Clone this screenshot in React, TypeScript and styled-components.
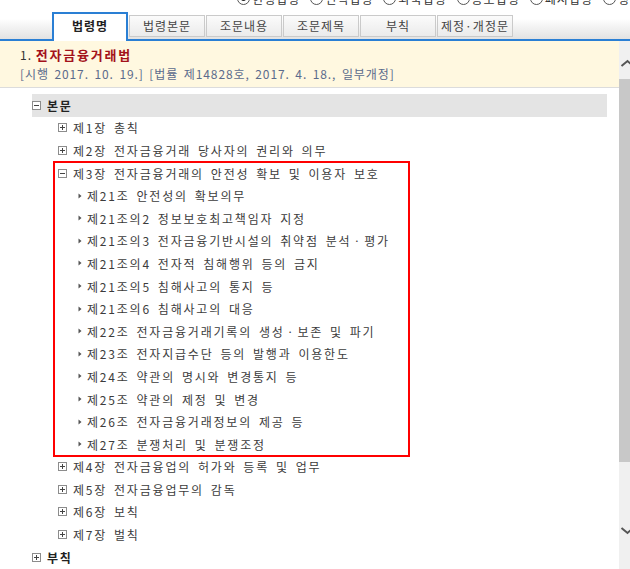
import React from "react";
import styled, { createGlobalStyle } from "styled-components";

const GlobalStyle = createGlobalStyle`
  html, body {
    margin: 0;
    padding: 0;
    background: #fff;
  }
  body {
    width: 630px;
    height: 569px;
    overflow: hidden;
    font-family: "Noto Sans CJK KR", "Noto Sans", sans-serif;
    font-size: 12px;
    color: #333;
  }
`;

const Page = styled.div`
  width: 630px;
  height: 569px;
  display: flex;
  flex-direction: column;
  overflow: hidden;
`;

const RadioRow = styled.div`
  display: flex;
  align-items: center;
  gap: 10px;
  height: 13px;
  margin-top: -8px;
  padding-left: 237px;
  flex: none;
`;

const RadioItem = styled.label`
  display: flex;
  align-items: center;
  gap: 2px;
  flex: none;
  color: #333;
  letter-spacing: 1px;
  line-height: 13px;
  white-space: nowrap;
`;

const RadioCircle = styled.span<{ $checked?: boolean }>`
  width: 11px;
  height: 11px;
  border: 1px solid #555;
  border-radius: 50%;
  background: #fff;
  display: flex;
  align-items: center;
  justify-content: center;

  &::after {
    content: "";
    width: 5px;
    height: 5px;
    border-radius: 50%;
    background: ${(p) => (p.$checked ? "#222" : "transparent")};
  }
`;

const TabBar = styled.div`
  display: flex;
  align-items: flex-end;
  gap: 1px;
  height: 34px;
  padding-left: 52px;
  border-bottom: 2px solid #2a7fd4;
  background: linear-gradient(to bottom, #fff 0%, #fff 40%, #e2e2e2 100%);
  flex: none;
`;

const Tab = styled.div<{ $active?: boolean }>`
  box-sizing: border-box;
  width: 76px;
  display: flex;
  justify-content: center;
  letter-spacing: 1px;
  line-height: 16px;
  white-space: nowrap;
  ${(p) =>
    p.$active
      ? `
    height: 29px;
    margin-bottom: -2px;
    padding-top: 4px;
    border: 2px solid #2a7fd4;
    border-bottom: none;
    background: #fff;
    color: #222;
    font-weight: bold;
    position: relative;
    z-index: 1;
  `
      : `
    height: 22px;
    margin-bottom: 2px;
    align-items: center;
    border: 1px solid #cacaca;
    background: linear-gradient(to bottom, #fbfbfb, #ebebeb);
    color: #444;
  `}
`;

const Body = styled.div`
  flex: 1;
  display: flex;
  min-height: 0;
`;

const Main = styled.div`
  flex: 1;
  display: flex;
  flex-direction: column;
  min-width: 0;
`;

const Header = styled.div`
  background: #fff8e0;
  border-bottom: 1px solid #dcdcdc;
  padding: 5px 20px 3px;
  height: 38px;
`;

const TitleLine = styled.div`
  line-height: 18px;
  color: #333;
  letter-spacing: 1px;
`;

const LawTitle = styled.span`
  color: #a3121a;
  font-weight: bold;
  font-size: 13px;
  letter-spacing: 1.8px;
`;

const SubLine = styled.div`
  line-height: 20px;
  color: #5b6b8c;
  letter-spacing: 0.9px;
  word-spacing: 2px;
  white-space: nowrap;
`;

const Tree = styled.div`
  padding-top: 6px;
  display: flex;
  flex-direction: column;
`;

const Row = styled.div<{ $indent: number; $bold?: boolean; $shaded?: boolean }>`
  display: flex;
  align-items: center;
  gap: 6px;
  height: 22.6px;
  flex: none;
  padding-left: ${(p) => p.$indent}px;
  color: ${(p) => (p.$bold ? "#222" : "#3c3c3c")};
  font-weight: ${(p) => (p.$bold ? "bold" : "normal")};
  letter-spacing: 1.8px;
  word-spacing: 2.4px;
  white-space: nowrap;
  ${(p) =>
    p.$shaded
      ? `
    margin-left: 32px;
    width: 575px;
    padding-left: 0;
    background: #e4e4e4;
  `
      : ""}
`;

const ArticleRow = styled(Row)`
  gap: 5px;
`;

const Highlight = styled.div`
  margin-left: 54px;
  width: 355px;
  outline: 2px solid #ff0000;
  outline-offset: -1px;
  display: flex;
  flex-direction: column;
`;

const Scrollbar = styled.div`
  width: 11px;
  flex: none;
  background: #f0f0f0;
  display: flex;
  flex-direction: column;
  overflow: hidden;
`;

const ScrollEnd = styled.div<{ $grow?: boolean }>`
  flex: ${(p) => (p.$grow ? "1" : "none")};
  height: ${(p) => (p.$grow ? "auto" : "38px")};
  display: flex;
  flex-direction: column;
  justify-content: ${(p) => (p.$grow ? "flex-start" : "flex-end")};
  padding-bottom: ${(p) => (p.$grow ? "0" : "12px")};
  padding-top: ${(p) => (p.$grow ? "65px" : "0")};
  box-sizing: border-box;
`;

const Thumb = styled.div`
  height: 383px;
  background: #c8c8c8;
  flex: none;
`;

const ToggleIcon = ({ open }: { open?: boolean }) => (
  <svg width="9" height="9" viewBox="0 0 9 9" style={{ flex: "none" }}>
    <rect x="0.5" y="0.5" width="8" height="8" fill="#fff" stroke="#8c8c8c" />
    <path d="M2 4.5H7" stroke="#444" strokeWidth="1" />
    {!open && <path d="M4.5 2V7" stroke="#444" strokeWidth="1" />}
  </svg>
);

const ArrowIcon = () => (
  <svg width="4" height="6" viewBox="0 0 4 6" style={{ flex: "none" }}>
    <path d="M0.5 0.5L3.5 3L0.5 5.5Z" fill="#555" />
  </svg>
);

const Chevron = ({ up }: { up?: boolean }) => (
  <svg width="11" height="8" viewBox="0 0 11 8" style={{ flex: "none" }}>
    <path
      d={up ? "M2.5 7L8.5 2L14 7" : "M2.5 1L8.5 6L14 1"}
      fill="none"
      stroke="#555"
      strokeWidth="2"
    />
  </svg>
);

const radios = ["현행법령", "연혁법령", "외국법령", "공포법령", "폐지법령", "행정규칙"];
const tabs = ["법령명", "법령본문", "조문내용", "조문제목", "부칙", "제정·개정문"];

const beforeChapters = ["제1장 총칙", "제2장 전자금융거래 당사자의 권리와 의무"];
const openChapter = "제3장 전자금융거래의 안전성 확보 및 이용자 보호";
const articles = [
  "제21조 안전성의 확보의무",
  "제21조의2 정보보호최고책임자 지정",
  "제21조의3 전자금융기반시설의 취약점 분석ㆍ평가",
  "제21조의4 전자적 침해행위 등의 금지",
  "제21조의5 침해사고의 통지 등",
  "제21조의6 침해사고의 대응",
  "제22조 전자금융거래기록의 생성ㆍ보존 및 파기",
  "제23조 전자지급수단 등의 발행과 이용한도",
  "제24조 약관의 명시와 변경통지 등",
  "제25조 약관의 제정 및 변경",
  "제26조 전자금융거래정보의 제공 등",
  "제27조 분쟁처리 및 분쟁조정",
];
const afterChapters = [
  "제4장 전자금융업의 허가와 등록 및 업무",
  "제5장 전자금융업무의 감독",
  "제6장 보칙",
  "제7장 벌칙",
];

const App: React.FC = () => {
  return (
    <Page>
      <GlobalStyle />
      <RadioRow>
        {radios.map((r, i) => (
          <RadioItem key={r}>
            <RadioCircle $checked={i === 0} />
            {r}
          </RadioItem>
        ))}
      </RadioRow>
      <TabBar>
        {tabs.map((t, i) => (
          <Tab key={t} $active={i === 0}>
            {t}
          </Tab>
        ))}
      </TabBar>
      <Body>
        <Main>
          <Header>
            <TitleLine>
              1. <LawTitle>전자금융거래법</LawTitle>
            </TitleLine>
            <SubLine>[시행 2017. 10. 19.] [법률 제14828호, 2017. 4. 18., 일부개정]</SubLine>
          </Header>
          <Tree>
            <Row $indent={0} $bold $shaded>
              <ToggleIcon open />
              본문
            </Row>
            {beforeChapters.map((c) => (
              <Row key={c} $indent={58}>
                <ToggleIcon />
                {c}
              </Row>
            ))}
            <Highlight>
              <Row $indent={4}>
                <ToggleIcon open />
                {openChapter}
              </Row>
              {articles.map((a) => (
                <ArticleRow key={a} $indent={24}>
                  <ArrowIcon />
                  {a}
                </ArticleRow>
              ))}
            </Highlight>
            {afterChapters.map((c) => (
              <Row key={c} $indent={58}>
                <ToggleIcon />
                {c}
              </Row>
            ))}
            <Row $indent={32} $bold>
              <ToggleIcon />
              부칙
            </Row>
          </Tree>
        </Main>
        <Scrollbar>
          <ScrollEnd>
            <Chevron up />
          </ScrollEnd>
          <Thumb />
          <ScrollEnd $grow>
            <Chevron />
          </ScrollEnd>
        </Scrollbar>
      </Body>
    </Page>
  );
};

export default App;
